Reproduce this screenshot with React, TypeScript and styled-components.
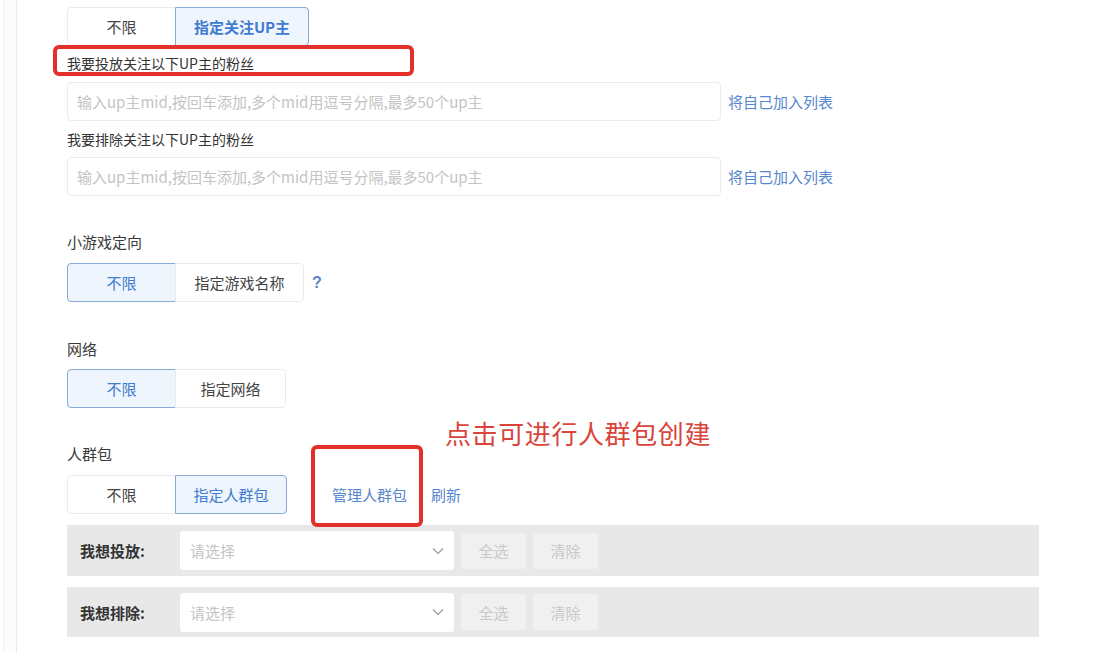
import React from 'react';
import styled, { createGlobalStyle } from 'styled-components';

const GlobalStyle = createGlobalStyle`
  html, body {
    margin: 0;
    padding: 0;
    background: #fff;
  }
  body {
    font-family: 'Noto Sans CJK SC', 'Noto Sans', sans-serif;
    color: #333;
  }
`;

const ChevronDown: React.FC = () => (
  <svg width="12" height="8" viewBox="0 0 12 8" fill="none">
    <path d="M1 1.5L6 6.5L11 1.5" stroke="#9a9a9a" strokeWidth="1.2" />
  </svg>
);

const App: React.FC = () => {
  return (
    <>
      <GlobalStyle />
      <Page>
        <Sidebar />
        <Main>
          <Group>
            <Seg width={109}>不限</Seg>
            <Seg width={134} active bold>
              指定关注UP主
            </Seg>
          </Group>

          <SubLabel top={7}>
            我要投放关注以下UP主的粉丝
            <LabelMark />
          </SubLabel>
          <InputRow top={9}>
            <TextInput placeholder="输入up主mid,按回车添加,多个mid用逗号分隔,最多50个up主" />
            <Link>将自己加入列表</Link>
          </InputRow>

          <SubLabel top={8}>我要排除关注以下UP主的粉丝</SubLabel>
          <InputRow top={8}>
            <TextInput placeholder="输入up主mid,按回车添加,多个mid用逗号分隔,最多50个up主" />
            <Link>将自己加入列表</Link>
          </InputRow>

          <SectionLabel top={36}>小游戏定向</SectionLabel>
          <GroupRow top={11}>
            <Group>
              <Seg width={109} active>
                不限
              </Seg>
              <Seg width={129}>指定游戏名称</Seg>
            </Group>
            <Help>?</Help>
          </GroupRow>

          <SectionLabel top={37}>网络</SectionLabel>
          <GroupRow top={10}>
            <Group>
              <Seg width={109} active>
                不限
              </Seg>
              <Seg width={111}>指定网络</Seg>
            </Group>
          </GroupRow>

          <CrowdHead>
            <SectionLabel top={36}>人群包</SectionLabel>
            <Annotation>点击可进行人群包创建</Annotation>
          </CrowdHead>
          <GroupRow top={11}>
            <Group>
              <Seg width={109}>不限</Seg>
              <Seg width={112} active>
                指定人群包
              </Seg>
            </Group>
            <Actions>
              <Link>管理人群包</Link>
              <Link>刷新</Link>
              <ActionMark />
            </Actions>
          </GroupRow>

          {['我想投放:', '我想排除:'].map((t, i) => (
            <Bar key={t} tall={i === 0}>
              <BarLabel>{t}</BarLabel>
              <Select>
                <span>请选择</span>
                <ChevronDown />
              </Select>
              <GhostButton>全选</GhostButton>
              <GhostButton>清除</GhostButton>
            </Bar>
          ))}
        </Main>
      </Page>
    </>
  );
};

export default App;

const Page = styled.div`
  display: flex;
  width: 1102px;
  height: 653px;
  overflow: hidden;
`;

const Sidebar = styled.div`
  width: 16px;
  flex: none;
  border-right: 1px solid #ececec;
  background: linear-gradient(to right, #fff 0, #fff 3px, #f2f2f2 3px, #f2f2f2 4px, #fcfcfc 4px);
`;

const Main = styled.div`
  flex: 1;
  padding: 7px 0 0 50px;
  display: flex;
  flex-direction: column;
  align-items: flex-start;
`;

const Group = styled.div`
  display: flex;
  height: 39px;
`;

const GroupRow = styled.div<{ top: number }>`
  display: flex;
  align-items: center;
  margin-top: ${(p) => p.top}px;
`;

const Seg = styled.div<{ width: number; active?: boolean; bold?: boolean }>`
  width: ${(p) => p.width}px;
  box-sizing: border-box;
  display: flex;
  align-items: center;
  justify-content: center;
  font-size: 15px;
  font-weight: ${(p) => (p.bold ? 600 : 400)};
  color: ${(p) => (p.active ? '#3f7bcf' : '#444')};
  background: ${(p) => (p.active ? '#eef5fd' : '#fff')};
  border: 1px solid ${(p) => (p.active ? '#86a9d6' : '#ebebeb')};
  &:first-child {
    border-radius: 4px 0 0 4px;
  }
  &:last-child {
    border-radius: 0 4px 4px 0;
  }
  & + & {
    margin-left: -1px;
  }
`;

const SubLabel = styled.div<{ top: number }>`
  position: relative;
  margin-top: ${(p) => p.top}px;
  font-size: 14px;
  line-height: 20px;
  color: #333;
`;

const SectionLabel = styled(SubLabel)`
  font-size: 15px;
  color: #3a3a3a;
`;

const LabelMark = styled.span`
  position: absolute;
  left: -14px;
  top: -8px;
  width: 361px;
  height: 31px;
  box-sizing: border-box;
  border: 4px solid #e3302a;
  border-radius: 6px;
`;

const InputRow = styled.div<{ top: number }>`
  display: flex;
  align-items: center;
  margin-top: ${(p) => p.top}px;
`;

const TextInput = styled.input`
  width: 654px;
  height: 39px;
  box-sizing: border-box;
  border: 1px solid #ececec;
  border-radius: 4px;
  padding: 0 9px;
  font-family: inherit;
  font-size: 15px;
  color: #333;
  outline: none;
  &::placeholder {
    color: #c4c4c4;
  }
`;

const Link = styled.span`
  font-size: 15px;
  color: #5787cd;
  margin-left: 7px;
`;

const Help = styled.span`
  margin-left: 8px;
  font-family: 'Liberation Sans', sans-serif;
  font-size: 16px;
  font-weight: 700;
  color: #5b84c4;
`;

const CrowdHead = styled.div`
  position: relative;
  align-self: stretch;
`;

const Annotation = styled.div`
  position: absolute;
  left: 378px;
  top: 9px;
  font-size: 26px;
  line-height: 32px;
  color: #d9443b;
  letter-spacing: 0.6px;
`;

const Actions = styled.div`
  position: relative;
  display: flex;
  align-items: center;
  margin-left: 45px;
  gap: 24px;
  & > span {
    margin-left: 0;
  }
`;

const ActionMark = styled.span`
  position: absolute;
  left: -21px;
  top: -39px;
  width: 112px;
  height: 82px;
  box-sizing: border-box;
  border: 4px solid #e3302a;
  border-radius: 6px;
`;

const Bar = styled.div<{ tall?: boolean }>`
  display: flex;
  align-items: center;
  width: 972px;
  height: ${(p) => (p.tall ? 51 : 50)}px;
  margin-top: 11px;
  padding-left: 13px;
  box-sizing: border-box;
  background: #e8e8e8;
`;

const BarLabel = styled.div`
  width: 100px;
  font-size: 15px;
  font-weight: 700;
  color: #333;
`;

const Select = styled.div`
  width: 274px;
  height: 39px;
  box-sizing: border-box;
  display: flex;
  align-items: center;
  justify-content: space-between;
  padding: 0 10px;
  background: #fff;
  border-radius: 3px;
  font-size: 15px;
  color: #c4c4c4;
`;

const GhostButton = styled.div`
  width: 65px;
  height: 36px;
  margin-left: 7px;
  display: flex;
  align-items: center;
  justify-content: center;
  background: #f0f0f0;
  border-radius: 3px;
  font-size: 15px;
  color: #c8c8c8;
`;
